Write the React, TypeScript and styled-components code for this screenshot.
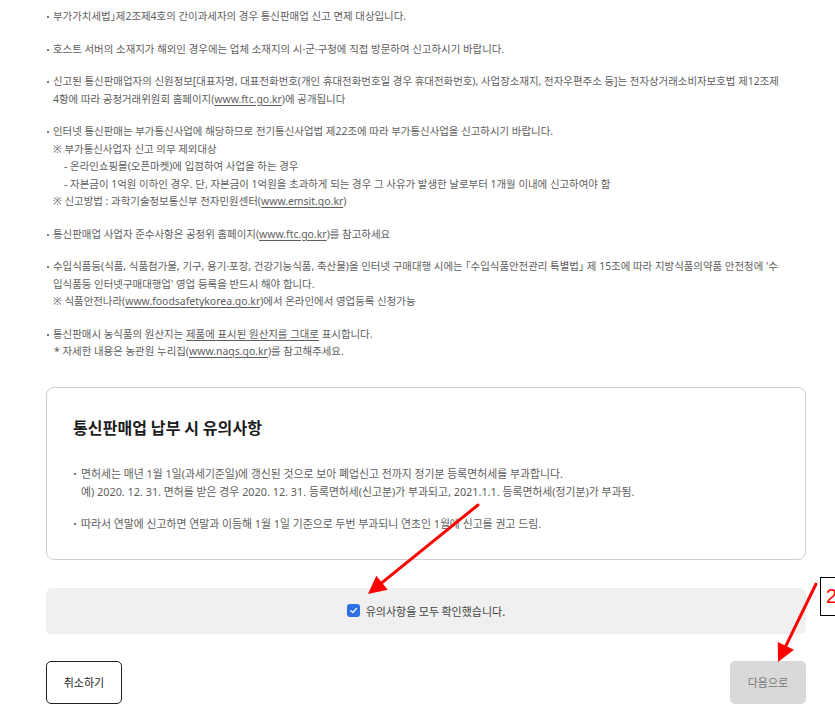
import React from "react";
import styled, { createGlobalStyle } from "styled-components";

const GlobalStyle = createGlobalStyle`
  html, body { margin: 0; padding: 0; background: #fff; }
  body {
    font-family: "Noto Sans CJK KR", "Noto Sans", "Liberation Sans", sans-serif;
    -webkit-font-smoothing: antialiased;
  }
  * { box-sizing: border-box; }
`;

const Page = styled.div`
  position: relative;
  width: 835px;
  height: 720px;
  overflow: hidden;
  padding: 8px 29px 0 46px;
`;

const NoticeList = styled.ul`
  list-style: none;
  margin: 0;
  padding: 0;
`;

const NoticeItem = styled.li<{ $inset?: number; $lh?: number; $gap?: number; $size?: number }>`
  position: relative;
  padding-left: ${(p) => p.$inset ?? 7}px;
  margin-bottom: ${(p) => p.$gap ?? 15}px;
  font-family: "Noto Sans", "Noto Sans CJK KR", sans-serif;
  font-size: ${(p) => p.$size ?? 10.45}px;
  font-feature-settings: "palt";
  line-height: ${(p) => p.$lh ?? 17.5}px;
  color: #5e5e5e;
  &:last-child { margin-bottom: 0; }
  &::before {
    content: "";
    position: absolute;
    left: 1px;
    top: ${(p) => ((p.$lh ?? 17.5) / 2 - 0.5).toFixed(1)}px;
    width: 2px;
    height: 2px;
    background: #7a7a7a;
  }
`;

const SubLine = styled.div<{ $indent?: number }>`
  padding-left: ${(p) => p.$indent ?? 0}px;
`;

const Link = styled.span`
  text-decoration: underline;
  text-underline-offset: 2px;
  color: inherit;
`;

const CautionBox = styled.section`
  margin-top: 26px;
  border: 1px solid #cfcfcf;
  border-radius: 8px;
  padding: 27px 26px 26px;
`;

const BoxTitle = styled.h3`
  margin: 0;
  font-size: 16px;
  font-weight: 700;
  line-height: 24px;
  color: #1c1c1c;
  letter-spacing: 0.1px;
`;

const BoxList = styled(NoticeList)`
  margin-top: 26px;
`;

const ConfirmBar = styled.label`
  margin-top: 28px;
  height: 46px;
  border-radius: 6px;
  background: #f0f0f0;
  display: flex;
  align-items: center;
  justify-content: center;
  gap: 6px;
  font-size: 11px;
  font-feature-settings: "palt";
  color: #444;
`;

const CheckMark = styled.span`
  width: 13px;
  height: 13px;
  border-radius: 3px;
  background: #2f6fe4;
  display: inline-flex;
  align-items: center;
  justify-content: center;
`;

const ButtonRow = styled.div`
  margin-top: 27px;
  display: flex;
  justify-content: space-between;
`;

const Button = styled.button<{ $variant: "outline" | "disabled" }>`
  width: 76px;
  height: 43px;
  border-radius: 5px;
  font-family: inherit;
  font-size: 11px;
  cursor: pointer;
  border: ${(p) => (p.$variant === "outline" ? "1px solid #222" : "none")};
  background: ${(p) => (p.$variant === "outline" ? "#fff" : "#d9d9d9")};
  color: ${(p) => (p.$variant === "outline" ? "#222" : "#777")};
`;

const Annotation = styled.svg`
  position: absolute;
  left: 0;
  top: 0;
  pointer-events: none;
`;

const StepLabel = styled.div`
  position: absolute;
  left: 820px;
  top: 577px;
  width: 32px;
  height: 39px;
  border: 1px solid #000;
  background: #fff;
  color: #ff0000;
  font-family: "Liberation Sans", sans-serif;
  font-size: 20px;
  line-height: 37px;
  padding-left: 5px;
`;

function arrowHead(x1: number, y1: number, tx: number, ty: number, len: number, half: number) {
  const dx = tx - x1;
  const dy = ty - y1;
  const d = Math.hypot(dx, dy);
  const ux = dx / d;
  const uy = dy / d;
  const bx = tx - ux * len;
  const by = ty - uy * len;
  const px = -uy * half;
  const py = ux * half;
  return {
    base: [bx, by],
    points: `${tx},${ty} ${bx + px},${by + py} ${bx - px},${by - py}`,
  };
}

const Arrow: React.FC<{ x1: number; y1: number; x2: number; y2: number }> = ({ x1, y1, x2, y2 }) => {
  const h = arrowHead(x1, y1, x2, y2, 18, 9);
  return (
    <g>
      <line x1={x1} y1={y1} x2={h.base[0]} y2={h.base[1]} stroke="#ff0000" strokeWidth={3} strokeLinecap="round" />
      <polygon points={h.points} fill="#ff0000" />
    </g>
  );
};

const BOX_ITEM = { $inset: 8, $lh: 18, $gap: 14, $size: 10.85 };

export default function App() {
  return (
    <>
      <GlobalStyle />
      <Page>
        <NoticeList>
          <NoticeItem>부가가치세법」제2조제4호의 간이과세자의 경우 통신판매업 신고 면제 대상입니다.</NoticeItem>
          <NoticeItem>호스트 서버의 소재지가 해외인 경우에는 업체 소재지의 시·군·구청에 직접 방문하여 신고하시기 바랍니다.</NoticeItem>
          <NoticeItem>
            신고된 통신판매업자의 신원정보[대표자명, 대표전화번호(개인 휴대전화번호일 경우 휴대전화번호), 사업장소재지, 전자우편주소 등]는 전자상거래소비자보호법 제12조제
            <br />
            4항에 따라 공정거래위원회 홈페이지(<Link>www.ftc.go.kr</Link>)에 공개됩니다
          </NoticeItem>
          <NoticeItem>
            <SubLine>인터넷 통신판매는 부가통신사업에 해당하므로 전기통신사업법 제22조에 따라 부가통신사업을 신고하시기 바랍니다.</SubLine>
            <SubLine>※ 부가통신사업자 신고 의무 제외대상</SubLine>
            <SubLine $indent={11}>- 온라인쇼핑몰(오픈마켓)에 입점하여 사업을 하는 경우</SubLine>
            <SubLine $indent={11}>- 자본금이 1억원 이하인 경우. 단, 자본금이 1억원을 초과하게 되는 경우 그 사유가 발생한 날로부터 1개월 이내에 신고하여야 함</SubLine>
            <SubLine>※ 신고방법 : 과학기술정보통신부 전자민원센터(<Link>www.emsit.go.kr</Link>)</SubLine>
          </NoticeItem>
          <NoticeItem>통신판매업 사업자 준수사항은 공정위 홈페이지(<Link>www.ftc.go.kr</Link>)를 참고하세요</NoticeItem>
          <NoticeItem>
            <SubLine>
              수입식품등(식품, 식품첨가물, 기구, 용기·포장, 건강기능식품, 축산물)을 인터넷 구매대행 시에는 「수입식품안전관리 특별법」 제 15조에 따라 지방식품의약품 안전청에 '수
              <br />
              입식품등 인터넷구매대행업' 영업 등록을 반드시 해야 합니다.
            </SubLine>
            <SubLine>※ 식품안전나라(<Link>www.foodsafetykorea.go.kr</Link>)에서 온라인에서 영업등록 신청가능</SubLine>
          </NoticeItem>
          <NoticeItem>
            <SubLine>
              통신판매시 농식품의 원산지는 <Link>제품에 표시된 원산지를 그대로</Link> 표시합니다.
            </SubLine>
            <SubLine $indent={1}>* 자세한 내용은 농관원 누리집(<Link>www.naqs.go.kr</Link>)를 참고해주세요.</SubLine>
          </NoticeItem>
        </NoticeList>

        <CautionBox>
          <BoxTitle>통신판매업 납부 시 유의사항</BoxTitle>
          <BoxList>
            <NoticeItem {...BOX_ITEM}>
              <SubLine>면허세는 매년 1월 1일(과세기준일)에 갱신된 것으로 보아 폐업신고 전까지 정기분 등록면허세를 부과합니다.</SubLine>
              <SubLine>예) 2020. 12. 31. 면허를 받은 경우 2020. 12. 31. 등록면허세(신고분)가 부과되고, 2021.1.1. 등록면허세(정기분)가 부과됨.</SubLine>
            </NoticeItem>
            <NoticeItem {...BOX_ITEM}>
              따라서 연말에 신고하면 연말과 이듬해 1월 1일 기준으로 두번 부과되니 연초인 1월에 신고를 권고 드림.
            </NoticeItem>
          </BoxList>
        </CautionBox>

        <ConfirmBar>
          <CheckMark>
            <svg width="9" height="9" viewBox="0 0 10 10">
              <path d="M2 5.2 L4.2 7.3 L8.2 2.8" fill="none" stroke="#fff" strokeWidth="1.4" strokeLinecap="round" strokeLinejoin="round" />
            </svg>
          </CheckMark>
          유의사항을 모두 확인했습니다.
        </ConfirmBar>

        <ButtonRow>
          <Button $variant="outline">취소하기</Button>
          <Button $variant="disabled">다음으로</Button>
        </ButtonRow>

        <Annotation width="835" height="720" viewBox="0 0 835 720">
          <Arrow x1={478} y1={505} x2={368} y2={594} />
          <Arrow x1={816} y1={584} x2={778} y2={662} />
        </Annotation>
        <StepLabel>2</StepLabel>
      </Page>
    </>
  );
}
